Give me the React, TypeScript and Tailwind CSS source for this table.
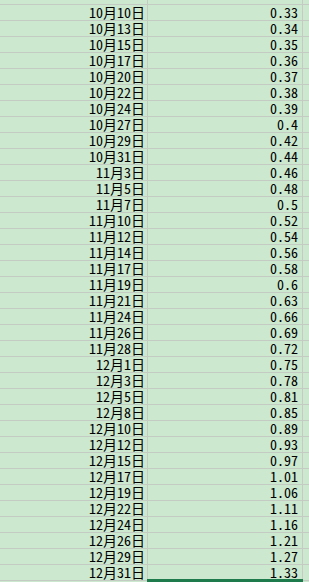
const rows: [string, string][] = [
  ["10月10日", "0.33"],
  ["10月13日", "0.34"],
  ["10月15日", "0.35"],
  ["10月17日", "0.36"],
  ["10月20日", "0.37"],
  ["10月22日", "0.38"],
  ["10月24日", "0.39"],
  ["10月27日", "0.4"],
  ["10月29日", "0.42"],
  ["10月31日", "0.44"],
  ["11月3日", "0.46"],
  ["11月5日", "0.48"],
  ["11月7日", "0.5"],
  ["11月10日", "0.52"],
  ["11月12日", "0.54"],
  ["11月14日", "0.56"],
  ["11月17日", "0.58"],
  ["11月19日", "0.6"],
  ["11月21日", "0.63"],
  ["11月24日", "0.66"],
  ["11月26日", "0.69"],
  ["11月28日", "0.72"],
  ["12月1日", "0.75"],
  ["12月3日", "0.78"],
  ["12月5日", "0.81"],
  ["12月8日", "0.85"],
  ["12月10日", "0.89"],
  ["12月12日", "0.93"],
  ["12月15日", "0.97"],
  ["12月17日", "1.01"],
  ["12月19日", "1.06"],
  ["12月22日", "1.11"],
  ["12月24日", "1.16"],
  ["12月26日", "1.21"],
  ["12月29日", "1.27"],
  ["12月31日", "1.33"],
];

const rowCls =
  "grid grid-cols-[148px_155px_1fr] h-[16px] border-t border-[#c3cbc3]";
const cellA = "border-r border-[#c3cbc3] text-right pr-[2px]";
const cellB = "border-r border-[#c3cbc3] text-right pr-[4px]";

export default function App() {
  return (
    <div className="w-[309px] h-[582px] overflow-hidden bg-[#cce8cf] text-black text-[14px] leading-[15px] font-['Noto_Sans_CJK_SC',sans-serif] [font-feature-settings:'hwid']">
      {/* partial row above the first visible line */}
      <div className="grid grid-cols-[148px_155px_1fr] h-[4px]">
        <div className="border-r border-[#c3cbc3]" />
        <div className="border-r border-[#c3cbc3]" />
        <div />
      </div>
      {rows.map(([date, val]) => (
        <div key={date} className={rowCls}>
          <div className={cellA}>{date}</div>
          <div className={cellB}>{val}</div>
          <div />
        </div>
      ))}
      {/* selected cell below */}
      <div className={rowCls}>
        <div className="border-r border-[#c3cbc3]" />
        <div className="relative border-r border-[#c3cbc3]">
          <div className="absolute -top-[2px] -left-[1px] -right-[1px] h-[3px] bg-[#1e7b4c]" />
        </div>
        <div />
      </div>
    </div>
  );
}
